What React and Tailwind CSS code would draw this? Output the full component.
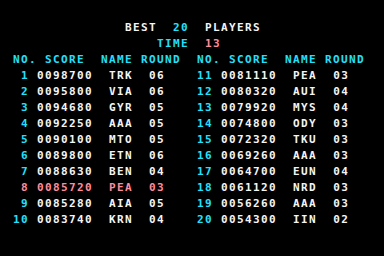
import React from 'react';

const left = [
  ['1', '0098700', 'TRK', '06'],
  ['2', '0095800', 'VIA', '06'],
  ['3', '0094680', 'GYR', '05'],
  ['4', '0092250', 'AAA', '05'],
  ['5', '0090100', 'MTO', '05'],
  ['6', '0089800', 'ETN', '06'],
  ['7', '0088630', 'BEN', '04'],
  ['8', '0085720', 'PEA', '03'],
  ['9', '0085280', 'AIA', '05'],
  ['10', '0083740', 'KRN', '04'],
];

const right = [
  ['11', '0081110', 'PEA', '03'],
  ['12', '0080320', 'AUI', '04'],
  ['13', '0079920', 'MYS', '04'],
  ['14', '0074800', 'ODY', '03'],
  ['15', '0072320', 'TKU', '03'],
  ['16', '0069260', 'AAA', '03'],
  ['17', '0064700', 'EUN', '04'],
  ['18', '0061120', 'NRD', '03'],
  ['19', '0056260', 'AAA', '03'],
  ['20', '0054300', 'IIN', '02'],
];

// the player's own entry is highlighted
const HIGHLIGHT = '8';

function Entry({ row }) {
  const [no, score, name, round] = row;
  const hl = no === HIGHLIGHT;
  const body = hl ? 'text-[#ff8c9c]' : 'text-[#f4f4f4]';
  return (
    <>
      <span className={hl ? 'text-[#ff8c9c]' : 'text-[#22e0ff]'}>{no.padStart(2, ' ')}</span>
      <span className={body}>{' ' + score + '  ' + name + '  ' + round}</span>
    </>
  );
}

export default function App() {
  return (
    <div className="w-[384px] h-[256px] bg-black overflow-hidden pt-5 pl-[13px] font-['DejaVu_Sans_Mono','Liberation_Mono',monospace] font-bold text-[11px] leading-4 tracking-[1.38px] whitespace-pre">
      <div>
        <span className="text-[#f4f4f4]">{'              BEST  '}</span>
        <span className="text-[#22e0ff]">20</span>
        <span className="text-[#f4f4f4]">{'  PLAYERS'}</span>
      </div>
      <div>
        <span className="text-[#22e0ff]">{'                  TIME  '}</span>
        <span className="text-[#ff8c9c]">13</span>
      </div>
      <div className="text-[#22e0ff]">{'NO. SCORE  NAME ROUND  NO. SCORE  NAME ROUND'}</div>
      {left.map((row, i) => (
        <div key={row[0]}>
          <Entry row={row} />
          <span>{'    '}</span>
          <Entry row={right[i]} />
        </div>
      ))}
    </div>
  );
}
